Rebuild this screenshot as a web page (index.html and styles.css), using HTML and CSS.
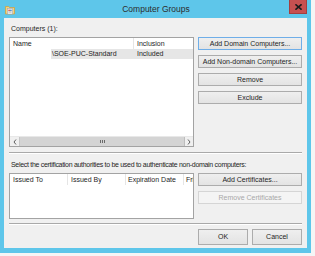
FILE: index.html
```html
<!DOCTYPE html>
<html>
<head>
<meta charset="utf-8">
<link rel="stylesheet" href="styles.css">
</head>
<body>
<div class="window">
  <div class="titlebar">
    <svg class="app-icon" width="10" height="11" viewBox="0 0 10 11">
      <path d="M0.5 2.5 h3 l1 1 h5 v6.5 h-9 z" fill="#f3d27a" stroke="#c9a24a" stroke-width="0.8"/>
      <rect x="2.5" y="4.5" width="5" height="5.5" fill="#ffffff" stroke="#9aa6b8" stroke-width="0.6"/>
      <rect x="3.3" y="5.6" width="1.6" height="1.4" fill="#d9534f"/>
      <rect x="5.1" y="5.6" width="1.6" height="1.4" fill="#4a86c8"/>
      <rect x="3.3" y="7.6" width="3.4" height="0.8" fill="#8a8a8a"/>
    </svg>
    <div class="title">Computer Groups</div>
    <div class="close">
      <svg width="7" height="6" viewBox="0 0 7 6">
        <path d="M1 0.8 L6 5.2 M6 0.8 L1 5.2" stroke="#1b1b1b" stroke-width="1.6" stroke-linecap="square"/>
      </svg>
    </div>
  </div>
  <div class="client">
    <div class="label">Computers (1):</div>
    <div class="pane pane-top">
      <div class="list list-computers">
        <div class="lv-header">
          <div class="hcell col-name">Name</div>
          <div class="hcell col-incl">Inclusion</div>
        </div>
        <div class="lv-body">
          <div class="lv-row selected">
            <div class="cell col-name-sel">\SOE-PUC-Standard</div>
            <div class="cell col-incl-sel">Included</div>
          </div>
        </div>
        <div class="hscroll">
          <div class="sb-arrow sb-left">
            <svg width="4" height="6" viewBox="0 0 4 6"><path d="M3 0.5 L1 3 L3 5.5" fill="none" stroke="#606060" stroke-width="1"/></svg>
          </div>
          <div class="sb-thumb">
            <span class="grip"></span><span class="grip"></span><span class="grip"></span>
          </div>
          <div class="sb-arrow sb-right">
            <svg width="4" height="6" viewBox="0 0 4 6"><path d="M1 0.5 L3 3 L1 5.5" fill="none" stroke="#606060" stroke-width="1"/></svg>
          </div>
        </div>
      </div>
      <div class="buttons">
        <button class="btn default">Add Domain Computers...</button>
        <button class="btn">Add Non-domain Computers...</button>
        <button class="btn">Remove</button>
        <button class="btn">Exclude</button>
      </div>
    </div>
    <div class="sep"></div>
    <div class="label label-tight">Select the certification authorities to be used to authenticate non-domain computers:</div>
    <div class="pane pane-certs">
      <div class="list list-certs">
        <div class="lv-header">
          <div class="hcell col-cert">Issued To</div>
          <div class="hcell col-cert">Issued By</div>
          <div class="hcell col-cert col-exp">Expiration Date</div>
          <div class="hcell col-fri">Fri</div>
        </div>
      </div>
      <div class="buttons">
        <button class="btn">Add Certificates...</button>
        <button class="btn" disabled>Remove Certificates</button>
      </div>
    </div>
    <div class="sep sep2"></div>
    <div class="footer">
      <button class="btn btn-big">OK</button>
      <button class="btn btn-big">Cancel</button>
    </div>
  </div>
</div>
</body>
</html>
```
FILE: styles.css
```css
* { box-sizing: border-box; }
html, body { margin: 0; padding: 0; }
body {
  width: 315px;
  height: 256px;
  overflow: hidden;
  background: #f5f5f5;
  font-family: "Liberation Sans", Arial, sans-serif;
  font-size: 7px;
  color: #1e1e1e;
}
.window {
  width: 311px;
  height: 253px;
  background: #5ec6ea;
  padding: 0 4px 5px 4px;
  display: flex;
  flex-direction: column;
}
.titlebar {
  height: 18px;
  margin: 0 -4px;
  padding: 0 4px 0 5px;
  display: grid;
  grid-template-columns: 1fr auto 1fr;
  align-items: start;
}
.app-icon { margin-top: 4px; justify-self: start; }
.title {
  font-size: 8.5px;
  line-height: 19px;
  color: #2d2d2d;
}
.close {
  justify-self: end;
  width: 18px;
  height: 14px;
  background: #c75050;
  border: 1px solid #a33f3f;
  border-top: none;
  display: flex;
  align-items: center;
  justify-content: center;
}
.client {
  flex: 1;
  background: #f0f0f0;
  padding: 0 5px;
  display: flex;
  flex-direction: column;
}
.label {
  height: 19px;
  padding-top: 4px;
  line-height: 13px;
  padding-left: 2px;
  white-space: nowrap;
}
.label-tight { letter-spacing: -0.3px; }
.pane {
  display: grid;
  grid-template-columns: 185px 104px;
  column-gap: 4px;
}
.pane-top { height: 110px; }
.pane-certs { height: 46px; }
.list {
  background: #fff;
  border: 1px solid #a3a3a3;
  display: flex;
  flex-direction: column;
  overflow: hidden;
}
.lv-header {
  display: flex;
  height: 11px;
  flex: none;
  white-space: nowrap;
}
.hcell {
  line-height: 11px;
  padding-left: 3px;
  border-right: 1px solid #e5e5e5;
  flex: none;
  overflow: hidden;
}
.col-name { width: 124px; }
.col-incl { width: 70px; }
.col-cert { width: 58px; }
.col-exp { padding-left: 2px; }
.col-fri { width: 30px; padding-left: 2px; }
.lv-body { flex: 1; }
.lv-row {
  display: flex;
  height: 10px;
  white-space: nowrap;
}
.lv-row.selected {
  margin-left: 41px;
  background: #e6e6e6;
}
.cell { line-height: 10px; flex: none; }
.col-name-sel { width: 83px; padding-left: 1px; }
.col-incl-sel { padding-left: 3px; }
.hscroll {
  height: 10px;
  flex: none;
  display: flex;
  background: #f0f0f0;
  border-top: 1px solid #e8e8e8;
}
.sb-arrow {
  width: 9px;
  display: flex;
  align-items: center;
  justify-content: center;
  flex: none;
}
.sb-right { border-left: 1px solid #bdbdbd; }
.sb-thumb {
  flex: 1;
  background: #d4d4d4;
  border-left: 1px solid #c6c6c6;
  display: flex;
  align-items: center;
  justify-content: center;
  gap: 1px;
}
.grip { width: 1px; height: 3px; background: #6a6a6a; }
.buttons {
  display: flex;
  flex-direction: column;
  gap: 5px;
}
.btn {
  font-family: "Liberation Sans", Arial, sans-serif;
  font-size: 7px;
  color: #1e1e1e;
  height: 13px;
  padding: 0;
  margin: 0;
  line-height: 11px;
  border: 1px solid #acacac;
  background: linear-gradient(#efefef, #e3e3e3);
  white-space: nowrap;
}
.btn.default { border-color: #6faee8; }
.btn:disabled {
  color: #a8a8a8;
  border-color: #d5d5d5;
  background: #f4f4f4;
}
.sep {
  flex: none;
  height: 2px;
  margin-top: 5px;
  border-top: 1px solid #a9a9a9;
  border-bottom: 1px solid #ffffff;
}
.sep2 { margin-top: 4px; }
.footer {
  padding-top: 4px;
  display: flex;
  justify-content: flex-end;
  gap: 4px;
}
.btn-big { width: 50px; height: 16px; line-height: 14px; }
```
